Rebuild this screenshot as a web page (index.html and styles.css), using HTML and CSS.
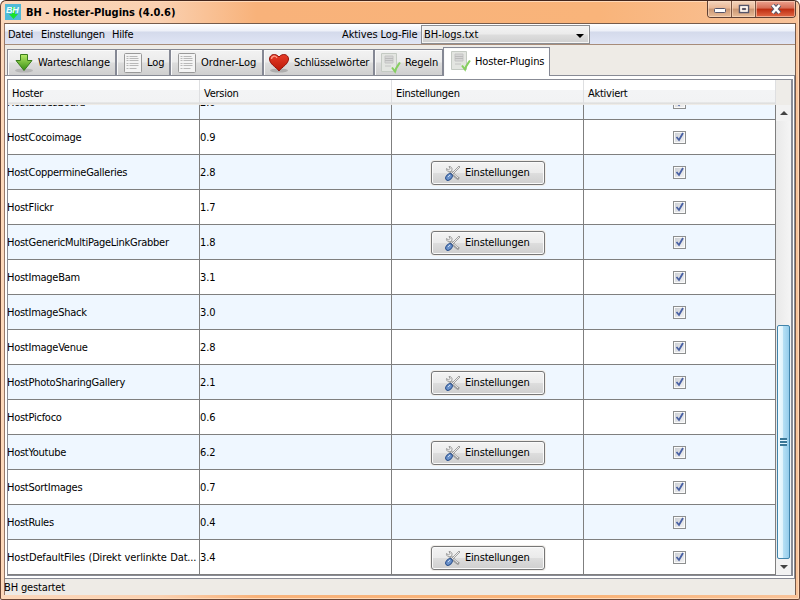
FILE: index.html
```html
<!DOCTYPE html>
<html lang="de"><head><meta charset="utf-8"><title>BH - Hoster-Plugins (4.0.6)</title><link rel="stylesheet" href="styles.css"></head>
<body>
<svg width="0" height="0" class="defs"><defs>
<linearGradient id="green" x2="0" y2="1"><stop stop-color="#b8ec68"/><stop offset="1" stop-color="#348c10"/></linearGradient>
<linearGradient id="red" x2="0" y2="1"><stop stop-color="#e83c28"/><stop offset="1" stop-color="#b81808"/></linearGradient>
<symbol id="down" viewBox="0 0 20 20"><ellipse cx="10" cy="17.5" rx="9" ry="2" fill="#999" opacity=".5"/><path d="M6.500 1.500h7v6h4.500l-8 10-8-10h4.500z" fill="url(#green)" stroke="#397c1c"/></symbol>
<symbol id="log" viewBox="0 0 20 22"><rect x="1.500" y="1.500" width="17" height="19" rx="1" fill="#f4f4f4" stroke="#999"/><path d="M3.500 4.500h2m1 0h8m-11 2h2m1 0h9m-12 2h2m1 0h9m-12 3h2m1 0h9m-12 2h2m1 0h9m-12 3h2m1 0h7" stroke="#b8b8b8"/></symbol>
<symbol id="heart" viewBox="0 0 22 20"><ellipse cx="11" cy="17.500" rx="9" ry="2" fill="#888" opacity=".5"/><path d="M11 18C8 14 1.500 11 1.500 6 1.500 1 8 0 11 4c3-4 9.500-3 9.500 2 0 5-6.500 8-9.500 12z" fill="url(#red)" stroke="#931109"/><path d="M3.500 6c0-3 4-4 5.500-1" fill="none" stroke="#ff9a86" stroke-width="1.300"/></symbol>
<symbol id="rule" viewBox="0 0 22 22"><path d="M2.500 1.500h15v18h-15z" fill="#e3e5e1" stroke="#c4cac3"/><path d="M6 4h8v7H6zM6 14h6" fill="#d5d5d5" stroke="#c4c4c4"/><path d="M6 6.500h8M6 8.500h8" stroke="#bbb"/><path d="M13 15.500l3 4c1-4 3-6 5-9" fill="none" stroke="#86cf60" stroke-width="2"/></symbol>
<symbol id="tools" viewBox="0 0 16 16"><path d="M4 5l7 7m0 0l3 2" stroke="#999" stroke-width="3"/><path d="M4 5l9 8" stroke="#eee"/><path d="M1.500 3.500l2 1.500 1.500-1.500-1-2c3 0 4 3 2 5-3 1-5-1-4.500-3z" fill="#eee" stroke="#999"/><path d="M14 1l1 1-8 8-1-1z" fill="#eee" stroke="#8d8d8d" stroke-width=".8"/><ellipse cx="4" cy="12" rx="3.800" ry="2.600" transform="rotate(-45 4 12)" fill="#6c93cc" stroke="#284f8d"/><path d="M3 12l2-2" stroke="#c8dcf3"/></symbol>
</defs></svg>
<div class="window">
<header class="title"><svg class="app" width="16" height="16"><rect width="16" height="16" fill="#50bad8"/><path d="M7 3h3v7h3l-4.500 5L4 10h3z" fill="#19e22c"/><text x="1" y="9" class="logo">BH</text></svg><h1>BH - Hoster-Plugins (4.0.6)</h1>
<div class="controls"><span><svg width="12" height="8"><rect x=".5" y="3.500" width="11" height="4" rx="1" fill="#fff" stroke="#55556a"/></svg></span><span><svg width="12" height="10"><path d="M1.500 1.500h9v7h-9z" fill="none" stroke="#55556a" stroke-width="1.500"/><path d="M3 3h6v4H3z" fill="none" stroke="#fff" stroke-width="1.500"/><path d="M4.500 4.500h3v1h-3z" fill="none" stroke="#55556a"/></svg></span><span class="close"><svg width="12" height="10"><path d="M2.500 1l7 8m0-8l-7 8" stroke="#59596c" stroke-width="4.500"/><path d="M2.500 1l7 8m0-8l-7 8" stroke="#fff" stroke-width="2.600"/></svg></span></div></header>
<main>
<nav class="menu"><span class="m1">Datei</span><span class="m2">Einstellungen</span><span class="m3">Hilfe</span><label>Aktives Log-File</label><div class="combo">BH-logs.txt<i></i></div></nav>
<div class="tabs"><div class="tab t1"><svg width="20" height="20"><use href="#down"/></svg>Warteschlange</div><div class="tab t2"><svg width="20" height="22"><use href="#log"/></svg>Log</div><div class="tab t3"><svg width="20" height="22"><use href="#log"/></svg>Ordner-Log</div><div class="tab t4"><svg width="22" height="20"><use href="#heart"/></svg>Schlüsselwörter</div><div class="tab t5"><svg width="22" height="22"><use href="#rule"/></svg>Regeln</div><div class="tab t6 active"><svg width="22" height="22"><use href="#rule"/></svg>Hoster-Plugins</div></div>
<section class="panel"><div class="tablebox"><div class="data"><div class="head"><span>Hoster</span><span>Version</span><span>Einstellungen</span><span>Aktiviert</span></div><div class="rows" id="rows"></div></div>
<aside class="scroll"><div class="corner"></div><div class="track"><div class="up"></div><div class="space"></div><div class="thumb"><i></i></div><div class="down"></div></div></aside></div></section>
<footer>BH gestartet</footer>
</main></div><script src="rows.js"></script></body></html>
```
FILE: styles.css
```css
*{box-sizing:border-box}
body{margin:0;width:800px;height:600px;overflow:hidden;font:11px/14px "DejaVu Sans Condensed","DejaVu Sans",sans-serif;font-stretch:condensed;color:#000;letter-spacing:-.26px;white-space:nowrap}
.defs{position:absolute}
svg{display:block;flex:none}
.window{height:600px;border:1px solid #6b4636;border-top-color:#43261c;border-radius:6px 6px 2px 2px;padding:0 4px 4px 3px;background:linear-gradient(90deg,#fbd8bc,#fad0b0 20%,#f8b27a 32%,#f9b47a 75%,#f8c39a);display:flex;flex-direction:column;box-shadow:inset 0 0 0 1px #ffd9b9}
.title{height:22px;display:flex;align-items:center;padding-left:1px}
.app{margin-right:5px}
.logo{font:italic bold 9px "Liberation Sans",sans-serif;fill:#eaffff}
h1{font:bold 11px/16px "DejaVu Sans Condensed","DejaVu Sans",sans-serif;margin:2px 0 0;letter-spacing:-.02px}
.controls{margin-left:auto;margin-right:-1px;align-self:flex-start;display:flex;height:17px;border:1px solid #5e4034;border-top:0;border-radius:0 0 4px 4px;overflow:hidden}
.controls span{width:24px;display:grid;place-items:center;border-right:1px solid #795341;background:linear-gradient(#f4d4bd,#e9b795 45%,#c99673 50%,#e9bd98);box-shadow:inset 0 0 0 1px #ffe2cc88}
.controls .close{width:39px;border:0;background:linear-gradient(#eca390,#d66c54 45%,#bd2c10 50%,#e36a46)}
main{flex:1;min-height:0;display:flex;flex-direction:column;border:1px solid #765b4b;border-left-color:#98796a;border-bottom:0;background:#eeebe6;margin-right:-1px}
.menu{height:21px;flex:none;display:flex;align-items:center;border-bottom:1px solid #a78c7a;background:linear-gradient(#fff,#edf0f8 35%,#d4daeb 40%,#e0e5f5)}
.menu>span,.menu>label{padding-top:1px}
.menu .m1{width:36px;padding-left:3px}.m2{width:71px}.m3{width:230px}
.menu label{width:78px;letter-spacing:-.1px}
.combo{width:169px;height:19px;margin-left:1px;padding:2px 2px 0;border:1px solid #8c8e92;background:linear-gradient(#f3f3f3,#ebebeb 48%,#ddd 52%,#d0d0d0);display:flex;letter-spacing:-.05px;box-shadow:inset 0 0 0 1px #f5f5f5}
.combo i{margin:6px 3px 0 auto;border:4px solid transparent;border-top-color:#000;border-bottom:0;height:4px}
.tabs{height:31px;flex:none;display:flex;align-items:flex-end;padding-left:2px;border-bottom:1px solid #888b95}
.tab{height:26px;border:1px solid #858894;border-bottom:0;background:linear-gradient(#f2f2f2,#ebebeb 48%,#ddd 52%,#cfcfcf);display:flex;align-items:center;line-height:16px;padding-top:1px;letter-spacing:-.12px;box-shadow:inset 1px 1px #fafafa}
.tab svg{margin-right:4px;margin-top:-1px}
.t1{width:109px;padding-left:6px}.t2{width:54px;padding-left:6px}.t3{width:93px;padding-left:6px}.t4{width:111px;padding-left:4px;letter-spacing:-.22px}.t5{width:69px;padding-left:4px}
.t3{letter-spacing:.05px}
.active{width:107px;height:29px;margin-bottom:-1px;padding-left:5px;padding-bottom:2px;background:#fff}
.panel{height:503px;flex:none;background:#fff;border-right:1px solid #888b95;border-bottom:1px solid #888b95;padding:3px 0 2px 2px}
.tablebox{height:497px;border:1px solid #888b95;border-right-width:2px;display:flex;background:#eeece8;width:786px}
.data{width:768px;flex:none;display:flex;flex-direction:column}
.head{height:25px;flex:none;display:grid;grid-template-columns:192px 192px 192px 1fr;line-height:28px;background:linear-gradient(#fff 40%,#f3f4f5 42%,#f2f3f4 88%,#d9dada 92%,#f5f1ec)}
.head span{padding-left:4px;border-right:1px solid #dedfe1}
.rows{height:470px;display:flex;flex-direction:column;justify-content:flex-end;overflow:hidden}
.row{height:35px;flex:none;display:grid;grid-template-columns:192px 192px 192px 192px;background:#fff}
.row.alt{background:#eff7ff}
.row>div{border-right:1px solid #7f7f7f;border-bottom:1px solid #7f7f7f;display:flex;align-items:center}
.row>.text{padding-top:2px;text-indent:-1px}
.row>.text+.text{text-indent:0;letter-spacing:-.1px}
.row .elided{letter-spacing:-.15px;word-spacing:.5px}
.row .mid{justify-content:center}
button{font:inherit;letter-spacing:-.2px;width:114px;height:24px;border:1px solid #777;border-radius:3px;background:linear-gradient(#f3f3f3,#ebebeb 48%,#ddd 52%,#cfcfcf);box-shadow:inset 0 0 0 1px #fafafa,0 0 0 1px #f1eeea;padding:1px 0 0 13px;display:flex;align-items:center;gap:4px;margin-left:1px;margin-top:1px}
.check{width:13px;height:13px;border:1px solid #8d8f8f;background:linear-gradient(135deg,#c8ccd2,#f5f5f5);box-shadow:inset 0 0 0 1px #fafafa}
.scroll{width:15px;display:flex;flex-direction:column}
.corner{height:25px}
.track{flex:1;background:linear-gradient(90deg,#e9e9e9,#f5f5f5);display:flex;flex-direction:column}
.up,.down{height:16px;flex:none;display:grid;place-items:center;background:#f2f2f2}
.up:after,.down:after{content:"";border:4px solid transparent;border-bottom-color:#444;border-top:0}.down:after{transform:rotate(180deg)}
.space{height:204px}
.thumb{height:234px;width:13px;margin-left:1px;border:1px solid #4084ab;border-radius:2px;background:linear-gradient(90deg,#f0fbff,#dff3fc 45%,#b4dff4 50%,#94cdec);display:grid;place-items:center}
.thumb i{width:7px;height:8px;background:repeating-linear-gradient(#3a7898 0 2px,#e4f6ff 2px 3px)}
footer{flex:1;line-height:18px;text-indent:-1px;letter-spacing:-.15px}
```
FILE: rows.js
```js
const plugins = [['HostBabesBoard','2.0'],['HostCocoimage','0.9'],['HostCoppermineGalleries','2.8',1],['HostFlickr','1.7'],['HostGenericMultiPageLinkGrabber','1.8',1],['HostImageBam','3.1'],['HostImageShack','3.0'],['HostImageVenue','2.8'],['HostPhotoSharingGallery','2.1',1],['HostPicfoco','0.6'],['HostYoutube','6.2',1],['HostSortImages','0.7'],['HostRules','0.4'],['HostDefaultFiles (Direkt verlinkte Dat...','3.4',1]];
document.getElementById('rows').innerHTML = plugins.map(([name,version,settings],i) => `<div class="row ${i%2===0?'alt':''}"><div class="text ${name.endsWith('...')?'elided':''}">${name}</div><div class="text">${version}</div><div class="mid">${settings?'<button><svg width="16" height="16"><use href="#tools"/></svg>Einstellungen</button>':''}</div><div class="mid"><span class="check"><svg width="11" height="11"><path d="M2.500 5l2.500 3 4-7" fill="none" stroke="#4860a4" stroke-width="1.800"/></svg></span></div></div>`).join('');
```
